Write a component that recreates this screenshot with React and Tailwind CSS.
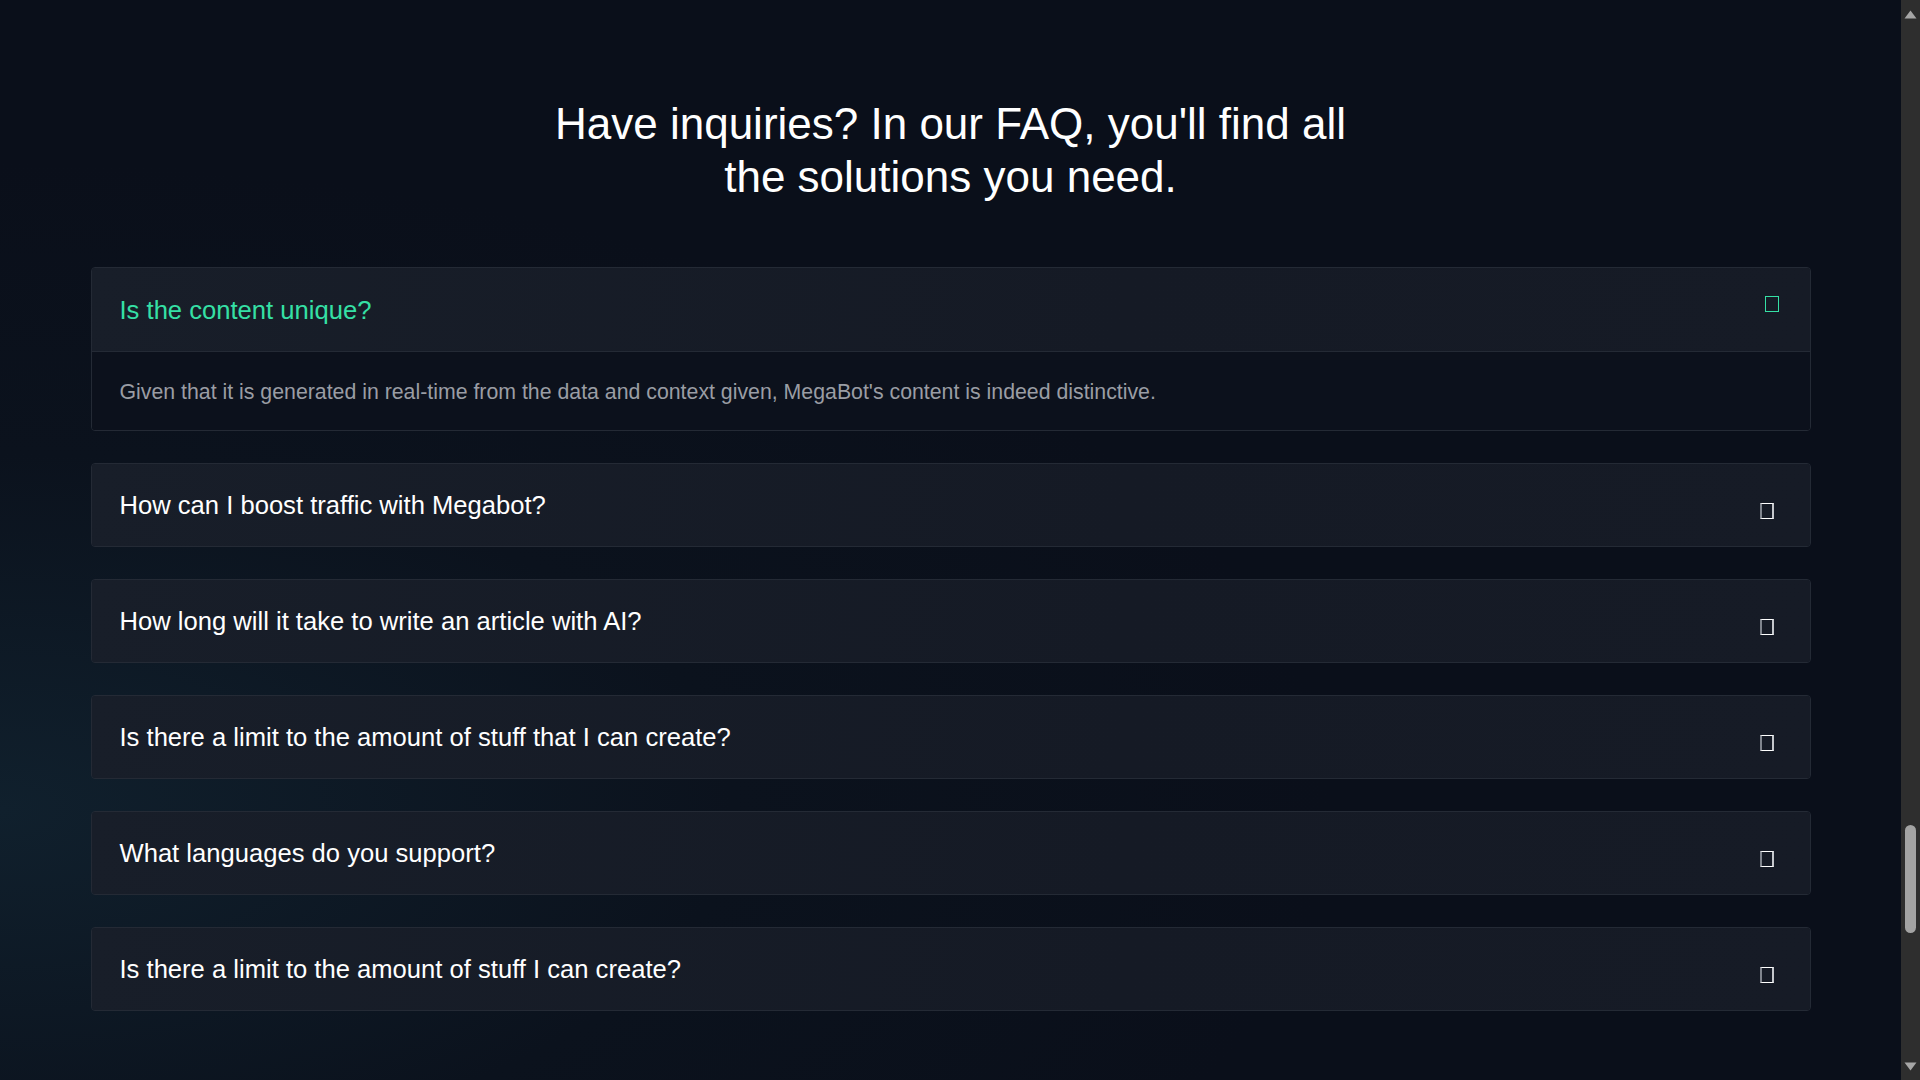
import React from "react";

const faqs = [
  {
    q: "Is the content unique?",
    a: "Given that it is generated in real-time from the data and context given, MegaBot's content is indeed distinctive.",
    open: true,
  },
  { q: "How can I boost traffic with Megabot?" },
  { q: "How long will it take to write an article with AI?" },
  { q: "Is there a limit to the amount of stuff that I can create?" },
  { q: "What languages do you support?" },
  { q: "Is there a limit to the amount of stuff I can create?" },
];

function Toggle({ open }) {
  if (open) {
    return (
      <span className="mr-[3px] mt-[-10px] block h-[16px] w-[14px] shrink-0 border border-[#35e0a5]" />
    );
  }
  return (
    <span className="mr-[8px] mt-[12px] block h-[16px] w-[14px] shrink-0 border-y border-y-white border-l-2 border-l-[#80858e] border-r-2 border-r-[#c4c7cc]" />
  );
}

function Item({ q, a, open }) {
  return (
    <div className="w-full rounded-[4px] border border-[#242a35] overflow-hidden">
      <div
        className={
          "flex items-center justify-between bg-[linear-gradient(100deg,#181e29_0%,#151a25_60%,#161b26_100%)] px-7 " +
          (open ? "h-[84px] border-b border-[#242a35]" : "h-[82px]")
        }
      >
        <span
          className={
            "mt-[2px] text-[25.6px] leading-[1.5] " + (open ? "text-[#35e0a5]" : "text-white")
          }
        >
          {q}
        </span>
        <Toggle open={open} />
      </div>
      {open && (
        <div className="bg-[#0c111c] px-7 pt-6 pb-[22px] text-[21.3px] leading-8 text-[#9a9da4]">
          {a}
        </div>
      )}
    </div>
  );
}

function Scrollbar() {
  return (
    <div className="flex h-full w-[19px] shrink-0 flex-col items-center bg-[#2e2e2e] pt-[10px] pb-[9px]">
      <svg width="13" height="9" viewBox="0 0 13 9" className="block">
        <path d="M6.5 0.5 L12.5 8.5 L0.5 8.5 Z" fill="#a6a6a6" />
      </svg>
      <div className="mt-[806px] h-[108px] w-[11px] rounded-full bg-[#a3a3a3]" />
      <div className="flex-1" />
      <svg width="13" height="9" viewBox="0 0 13 9" className="block">
        <path d="M0.5 0.5 L12.5 0.5 L6.5 8.5 Z" fill="#a6a6a6" />
      </svg>
    </div>
  );
}

export default function App() {
  return (
    <div className="flex h-screen w-full overflow-hidden bg-[#0a0f1a] font-['Liberation_Sans',Arial,sans-serif]">
      <main className="h-full min-w-0 flex-1 bg-[radial-gradient(ellipse_70%_60%_at_0%_75%,#10202d_0%,#0b121d_55%,#0a0f1a_100%)] px-[90px] pt-[98px]">
        <h2 className="mx-auto max-w-[830px] text-center text-[44px] leading-[1.2] text-white">
          Have inquiries? In our FAQ, you'll find all the solutions you need.
        </h2>
        <div className="mx-auto mt-[63px] flex max-w-[1720px] flex-col gap-8">
          {faqs.map((f, i) => (
            <Item key={i} {...f} />
          ))}
        </div>
      </main>
      <Scrollbar />
    </div>
  );
}
